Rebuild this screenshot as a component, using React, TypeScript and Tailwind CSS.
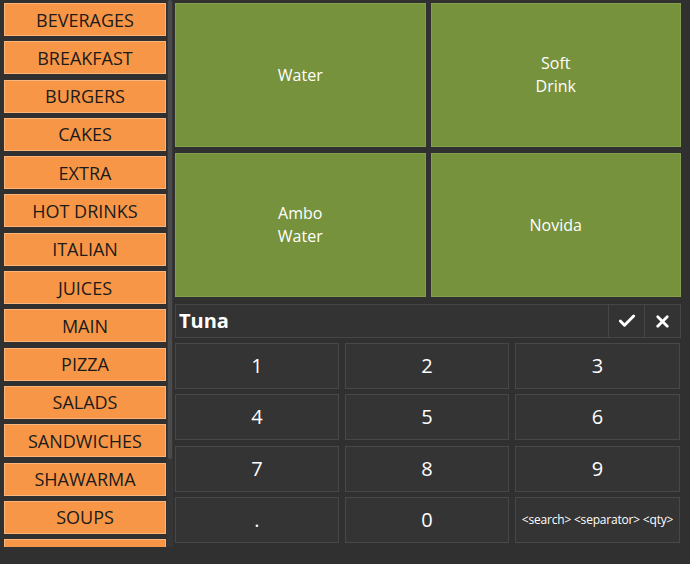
import { Check, X } from "lucide-react";

const categories = [
	"BEVERAGES",
	"BREAKFAST",
	"BURGERS",
	"CAKES",
	"EXTRA",
	"HOT DRINKS",
	"ITALIAN",
	"JUICES",
	"MAIN",
	"PIZZA",
	"SALADS",
	"SANDWICHES",
	"SHAWARMA",
	"SOUPS",
];

const products = [["Water"], ["Soft", "Drink"], ["Ambo", "Water"], ["Novida"]];

const keys = ["1", "2", "3", "4", "5", "6", "7", "8", "9", ".", "0"];

const font = { fontFamily: '"Open Sans", "Noto Sans", sans-serif' };

export default function App() {
	return (
		<div className="flex h-[564px] w-[690px] bg-[#303030] text-white" style={font}>
			{/* category list + scrollbar */}
			<div className="flex h-[547px] w-[175px] shrink-0 overflow-hidden">
				<div className="flex w-[166px] flex-col gap-[5.3px] pl-[4px] pt-[3px]">
					{categories.map((c) => (
						<button
							key={c}
							className="h-[33px] w-[162px] shrink-0 border border-[#fbb47a] bg-[#f79646] text-[18px] leading-none text-[#1b1b1b]"
						>
							{c}
						</button>
					))}
					{/* next item, scrolled out of view */}
					<button
						aria-label="SWEETS"
						className="h-[33px] w-[162px] shrink-0 border border-[#fbb47a] bg-[#f79646]"
					/>
				</div>
				<div className="ml-[1px] w-[6px] bg-[#363636]">
					<div className="ml-[1px] h-[459px] w-[4px] rounded-sm bg-[#4b4b4b]" />
				</div>
			</div>

			{/* right side */}
			<div className="flex w-[506px] flex-col pt-[3px]">
				<div className="grid grid-cols-2 gap-x-[5px] gap-y-[6px]">
					{products.map((p) => (
						<button
							key={p.join(" ")}
							className="flex h-[144px] flex-col items-center justify-center border border-[#849e4d] bg-[#76923c] text-[16px] leading-[23px]"
						>
							{p.map((l) => (
								<span key={l}>{l}</span>
							))}
						</button>
					))}
				</div>

				<div className="mt-[7px] flex h-[34px] border border-[#464646] bg-[#333333]">
					<div className="flex flex-1 items-center pl-[3px] text-[20px] font-bold">Tuna</div>
					<button className="flex w-[36px] items-center justify-center border-l border-[#464646]">
						<Check size={20} strokeWidth={3.5} />
					</button>
					<button className="flex w-[36px] items-center justify-center border-l border-[#464646]">
						<X size={19} strokeWidth={3.5} />
					</button>
				</div>

				<div className="mt-[5px] grid w-[505px] grid-cols-[164px_164px_165px] gap-x-[6px] gap-y-[5.3px]">
					{keys.map((k) => (
						<button
							key={k}
							className="h-[46px] border border-[#484848] bg-[#343434] text-[20px]"
						>
							{k}
						</button>
					))}
					<button className="h-[46px] whitespace-nowrap border border-[#484848] bg-[#343434] text-[12px] tracking-[-0.2px]">
						&lt;search&gt; &lt;separator&gt; &lt;qty&gt;
					</button>
				</div>
			</div>
		</div>
	);
}
